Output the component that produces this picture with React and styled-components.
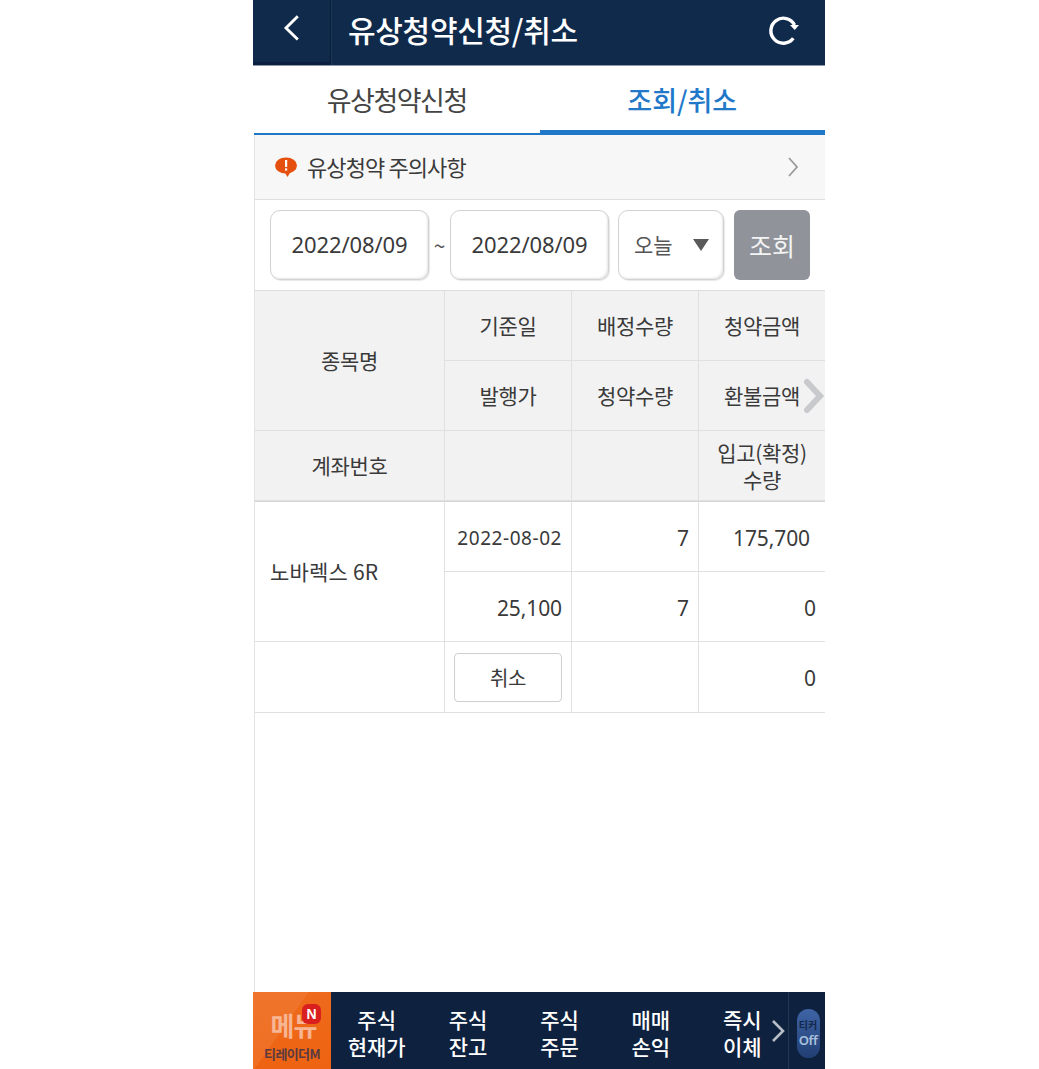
import React from "react";
import styled, { createGlobalStyle } from "styled-components";

const GlobalStyle = createGlobalStyle`
  html, body {
    margin: 0;
    padding: 0;
    background: #fff;
  }
  * {
    box-sizing: border-box;
  }
`;

const Phone = styled.div`
  width: 572px;
  height: 1069px;
  margin-left: 253px;
  display: flex;
  flex-direction: column;
  overflow: hidden;
  background: #fff;
  color: #333;
  font-family: "Noto Sans CJK KR", "Noto Sans", sans-serif;
`;

const Header = styled.header`
  height: 66px;
  flex: none;
  display: flex;
  align-items: center;
  background: #102a4c;
  border-bottom: 1px solid #8e99a8;
`;

const BackButton = styled.div`
  width: 78px;
  height: 65px;
  padding-bottom: 7px;
  display: flex;
  align-items: center;
  justify-content: center;
  border-right: 1px solid #0a1e38;
  border-bottom: 3px solid #0b2040;
  box-shadow: 1px 0 0 #1b3658;
`;

const Title = styled.h1`
  flex: 1;
  margin: 0 0 8px 17px;
  color: #fff;
  font-size: 30px;
  font-weight: 500;
  letter-spacing: -0.3px;
`;

const RefreshButton = styled.div`
  width: 32px;
  height: 36px;
  margin-right: 25px;
  margin-bottom: 5px;
`;

const Tabs = styled.div`
  height: 69px;
  flex: none;
  display: flex;
  padding-left: 1px;
`;

const Tab = styled.div`
  flex: 1;
  display: flex;
  align-items: center;
  justify-content: center;
  padding-top: ${(p) => (p.$active ? 2 : 0)}px;
  font-size: 27px;
  letter-spacing: ${(p) => (p.$active ? 0 : -1.5)}px;
  font-weight: ${(p) => (p.$active ? 500 : 400)};
  color: ${(p) => (p.$active ? "#2178c9" : "#444")};
  border-bottom: ${(p) => (p.$active ? "5px solid #2178c9" : "2px solid #2178c9")};
`;

const Notice = styled.div`
  height: 65px;
  flex: none;
  margin-left: 1px;
  display: flex;
  align-items: center;
  padding: 0 26px 0 20px;
  background: #f7f7f7;
  border-bottom: 1px solid #dfdfdf;
  border-left: 1px solid #e4e4e4;
  font-size: 22px;
  letter-spacing: -0.9px;
  color: #3a3a3a;
`;

const NoticeText = styled.span`
  flex: 1;
  margin-left: 10px;
  margin-bottom: 2px;
`;

const Filter = styled.div`
  height: 91px;
  flex: none;
  display: flex;
  align-items: flex-start;
  padding: 10px 0 0 15px;
  margin-left: 1px;
  border-bottom: 1px solid #dcdcdc;
  border-left: 1px solid #e4e4e4;
`;

const Field = styled.div`
  width: ${(p) => p.$width}px;
  height: 70px;
  display: flex;
  align-items: center;
  justify-content: center;
  padding-bottom: 2px;
  background: #fff;
  border: 1px solid #d2d2d2;
  border-radius: 10px;
  box-shadow: inset -1px -1px 2px #e6e6e6, 1px 1px 1px #e8e8e8;
  font-family: "Noto Sans", "Noto Sans CJK KR", sans-serif;
  font-size: 22px;
  letter-spacing: -0.1px;
  color: #3a3a3a;
`;

const SelectField = styled(Field)`
  margin-left: 9px;
  padding: 0 14px 2px 15px;
  justify-content: flex-start;
`;

const Tilde = styled.span`
  width: 21px;
  text-align: center;
  font-size: 21px;
  line-height: 70px;
  color: #555;
`;

const SelectLabel = styled.span`
  flex: 1;
  font-size: 21px;
  color: #555;
  font-family: "Noto Sans CJK KR", sans-serif;
`;

const Arrow = styled.span`
  width: 0;
  height: 0;
  margin-top: 1px;
  border-left: 8px solid transparent;
  border-right: 8px solid transparent;
  border-top: 12px solid #5a5a5a;
`;

const SearchButton = styled.div`
  width: 76px;
  height: 70px;
  margin-left: 10px;
  display: flex;
  align-items: center;
  justify-content: center;
  background: #90939a;
  border-radius: 6px;
  color: #f4f4f4;
  font-size: 25px;
  font-family: "Noto Sans CJK KR", sans-serif;
`;

const Grid = styled.div`
  position: relative;
  display: grid;
  flex: none;
  margin-left: 1px;
  border-left: 1px solid #e4e4e4;
  grid-template-columns: 190px 127px 127px 126px;
  grid-template-rows: ${(p) => (p.$head ? "70px 70px 70px" : "70px 70px 71px")};
  background: ${(p) => (p.$head ? "#f2f2f2" : "#fff")};
  border-bottom: ${(p) => (p.$head ? "1px solid #d6d6d6" : "none")};
`;

const Cell = styled.div`
  grid-row: ${(p) => p.$row || "auto"};
  display: flex;
  align-items: center;
  justify-content: ${(p) => p.$align || "center"};
  padding: ${(p) => p.$padding || "0 8px"};
  border-right: ${(p) => (p.$last ? "none" : "1px solid #e0e0e0")};
  border-bottom: 1px solid #e0e0e0;
  font-size: 21px;
  letter-spacing: -0.3px;
  line-height: 27px;
  text-align: center;
  white-space: pre-line;
  color: #3a3a3a;
`;

const StockName = styled.span`
  letter-spacing: 0.2px;
`;

const Number = styled.span`
  margin-top: 3px;
  font-family: "Noto Sans", sans-serif;
  font-size: ${(p) => p.$size || 21}px;
  letter-spacing: ${(p) => p.$spacing || "-0.1px"};
`;

const ScrollHint = styled.div`
  position: absolute;
  right: -1px;
  top: 87px;
  width: 24px;
  height: 36px;
`;

const CancelButton = styled.div`
  width: 108px;
  height: 49px;
  margin-top: 1px;
  display: flex;
  align-items: center;
  justify-content: center;
  border: 1px solid #cfcfcf;
  border-radius: 4px;
  background: #fff;
  font-size: 20px;
`;

const Spacer = styled.div`
  flex: 1;
  margin-left: 1px;
  border-left: 1px solid #e4e4e4;
`;

const BottomNav = styled.nav`
  height: 77px;
  flex: none;
  display: flex;
  background: #0e223f;
`;

const MenuTile = styled.div`
  position: relative;
  width: 78px;
  flex: none;
  display: flex;
  flex-direction: column;
  align-items: center;
  background:
    linear-gradient(125deg, rgba(255, 255, 255, 0.07) 0 42%, transparent 42%),
    linear-gradient(180deg, #ee6a1c 0%, #ee6311 100%);
`;

const MenuLabel = styled.span`
  margin-top: 17px;
  padding-left: 3px;
  color: #f7b593;
  font-size: 26px;
  line-height: 32px;
  font-weight: 700;
  letter-spacing: -1px;
`;

const MenuBrand = styled.span`
  margin-top: 6px;
  color: #5a3a40;
  font-size: 13px;
  line-height: 14px;
  font-weight: 700;
  letter-spacing: -0.6px;
  white-space: nowrap;
`;

const NewBadge = styled.span`
  position: absolute;
  left: 49px;
  top: 12px;
  width: 19px;
  height: 20px;
  display: flex;
  align-items: center;
  justify-content: center;
  background: #d9201f;
  border-radius: 6px;
  color: #fff;
  font-family: "Liberation Sans", sans-serif;
  font-size: 14px;
  font-weight: 700;
`;

const NavItems = styled.div`
  flex: 1;
  display: grid;
  grid-template-columns: repeat(5, 91.4px);
`;

const NavItem = styled.div`
  display: flex;
  align-items: center;
  justify-content: center;
  padding-top: 4px;
  text-align: center;
  color: #fff;
  font-size: 21px;
  line-height: 27px;
  font-weight: 500;
  white-space: pre-line;
`;

const NavMore = styled.div`
  width: 0;
  display: flex;
  align-items: center;
  position: relative;
`;

const MoreIcon = styled.svg`
  position: absolute;
  right: 3px;
`;

const TickerSlot = styled.div`
  width: 37px;
  flex: none;
  display: flex;
  align-items: center;
  justify-content: center;
  padding: 6px 0 0 2px;
  border-left: 1px solid #26384f;
`;

const TickerPill = styled.div`
  width: 23px;
  height: 49px;
  display: flex;
  flex-direction: column;
  align-items: center;
  justify-content: center;
  border-radius: 12px;
  background: linear-gradient(180deg, #3f64a6, #213f74);
  font-family: "Noto Sans", "Noto Sans CJK KR", sans-serif;
`;

const TickerName = styled.span`
  color: #12284a;
  font-size: 10px;
  line-height: 14px;
  font-weight: 700;
`;

const TickerState = styled.span`
  color: #a9c0dc;
  font-size: 13px;
  line-height: 17px;
  font-weight: 600;
  letter-spacing: -0.4px;
`;

const headCells = [
  ["종목명", "1 / span 2"],
  ["기준일"],
  ["배정수량"],
  ["청약금액", null, true],
  ["발행가"],
  ["청약수량"],
  ["환불금액", null, true],
  ["계좌번호"],
  [""],
  [""],
  ["입고(확정)\n수량", null, true],
];

const navItems = ["주식\n현재가", "주식\n잔고", "주식\n주문", "매매\n손익", "즉시\n이체"];

export default function App() {
  return (
    <>
      <GlobalStyle />
      <Phone>
        <Header>
          <BackButton>
            <svg width="18" height="28" viewBox="0 0 18 28">
              <path d="M14.8 2.3 L3 14 L14.8 25.5" fill="none" stroke="#fff" strokeWidth="2.9" />
            </svg>
          </BackButton>
          <Title>유상청약신청/취소</Title>
          <RefreshButton>
            <svg width="32" height="36" viewBox="0 0 32 36">
              <path d="M25.3 26.3 A12.5 12.5 0 1 1 26.5 13" fill="none" stroke="#fff" strokeWidth="3.4" />
              <path d="M22 13 L31 13 L26.7 18 Z" fill="#fff" />
            </svg>
          </RefreshButton>
        </Header>

        <Tabs>
          <Tab>유상청약신청</Tab>
          <Tab $active>조회/취소</Tab>
        </Tabs>

        <Notice>
          <svg width="22" height="20" viewBox="0 0 22 20">
            <ellipse cx="11" cy="8.5" rx="11" ry="8" fill="#e6500f" />
            <path d="M9.5 15 L12.5 20 L15.5 15 Z" fill="#e6500f" />
            <rect x="10" y="3" width="2.2" height="7" fill="#fff" />
            <rect x="10" y="11.4" width="2.2" height="2.2" fill="#fff" />
          </svg>
          <NoticeText>유상청약 주의사항</NoticeText>
          <svg width="12" height="22" viewBox="0 0 12 22">
            <path d="M2 2 L10 11 L2 20" fill="none" stroke="#9a9a9a" strokeWidth="1.8" />
          </svg>
        </Notice>

        <Filter>
          <Field $width={159}>2022/08/09</Field>
          <Tilde>~</Tilde>
          <Field $width={159}>2022/08/09</Field>
          <SelectField $width={106}>
            <SelectLabel>오늘</SelectLabel>
            <Arrow />
          </SelectField>
          <SearchButton>조회</SearchButton>
        </Filter>

        <Grid $head>
          {headCells.map(([text, row, last], i) => (
            <Cell key={i} $row={row} $last={last}>
              {text}
            </Cell>
          ))}
          <ScrollHint>
            <svg width="24" height="36" viewBox="0 0 24 36">
              <path d="M5 4 L18 18 L5 32" fill="none" stroke="#c8c9cc" strokeWidth="6" strokeLinecap="round" />
            </svg>
          </ScrollHint>
        </Grid>

        <Grid>
          <Cell $row="1 / span 2" $align="flex-start" $padding="0 0 0 15px">
            <StockName>노바렉스 6R</StockName>
          </Cell>
          <Cell $align="flex-end" $padding="0 9px 0 0">
            <Number $size={19} $spacing="0.55px">2022-08-02</Number>
          </Cell>
          <Cell $align="flex-end" $padding="0 9px 0 0">
            <Number>7</Number>
          </Cell>
          <Cell $align="flex-end" $last $padding="0 15px 0 0">
            <Number>175,700</Number>
          </Cell>
          <Cell $align="flex-end" $padding="0 9px 0 0">
            <Number>25,100</Number>
          </Cell>
          <Cell $align="flex-end" $padding="0 9px 0 0">
            <Number>7</Number>
          </Cell>
          <Cell $align="flex-end" $last $padding="0 9px 0 0">
            <Number>0</Number>
          </Cell>
          <Cell />
          <Cell>
            <CancelButton>취소</CancelButton>
          </Cell>
          <Cell />
          <Cell $align="flex-end" $last $padding="0 9px 0 0">
            <Number>0</Number>
          </Cell>
        </Grid>

        <Spacer />

        <BottomNav>
          <MenuTile>
            <MenuLabel>메뉴</MenuLabel>
            <NewBadge>N</NewBadge>
            <MenuBrand>티레이더M</MenuBrand>
          </MenuTile>
          <NavItems>
            {navItems.map((item) => (
              <NavItem key={item}>{item}</NavItem>
            ))}
          </NavItems>
          <NavMore>
            <MoreIcon width="14" height="24" viewBox="0 0 14 24">
              <path d="M2 2 L12 12 L2 22" fill="none" stroke="#b9bec6" strokeWidth="2.6" />
            </MoreIcon>
          </NavMore>
          <TickerSlot>
            <TickerPill>
              <TickerName>티커</TickerName>
              <TickerState>Off</TickerState>
            </TickerPill>
          </TickerSlot>
        </BottomNav>
      </Phone>
    </>
  );
}
